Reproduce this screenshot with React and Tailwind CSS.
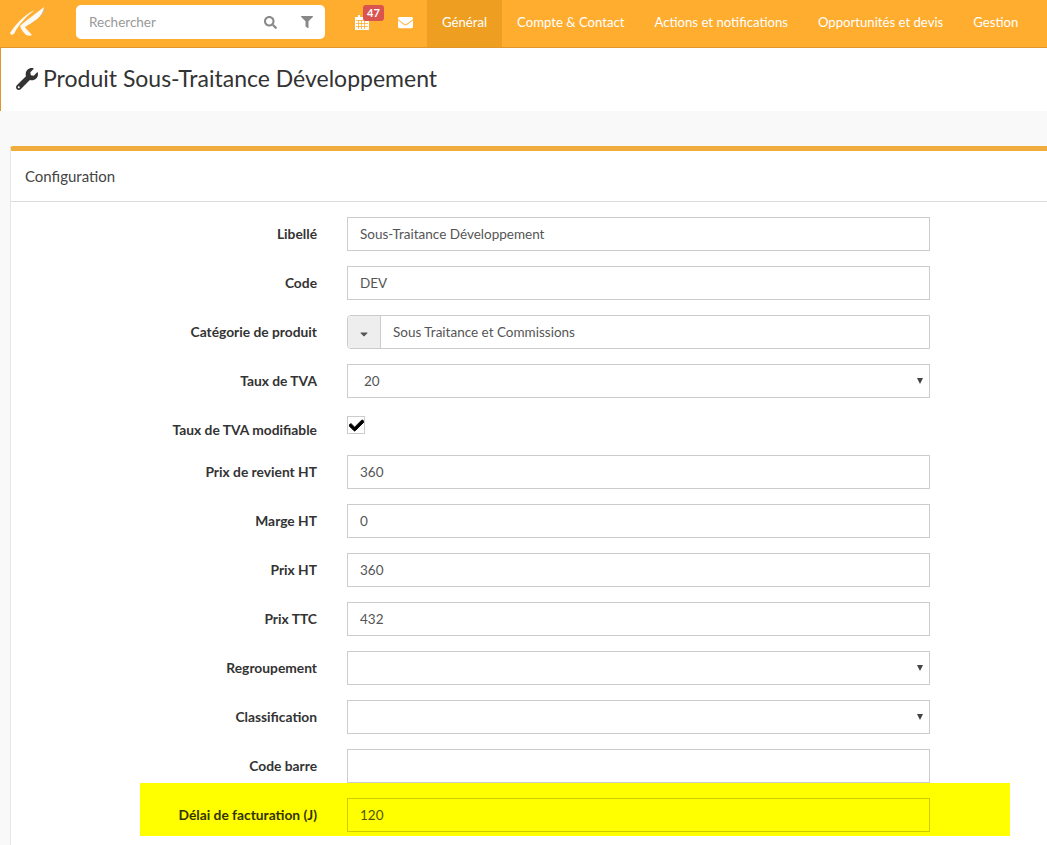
import React from "react";
import { FaCaretDown, FaCheck, FaEnvelope, FaFilter, FaSearch, FaWrench } from "react-icons/fa";

const font = { fontFamily: '"Lato", "Noto Sans", sans-serif' };

const navItems = ["Général", "Compte & Contact", "Actions et notifications", "Opportunités et devis", "Gestion"];

const Logo = () => (
  <svg width="38" height="32" viewBox="0 0 38 32">
    <path fill="#b9b5a8" d="M36 2 C35 9 27 14 18 20 L16 19 C24 14 31 9 36 2 Z" />
    <path fill="#fbf9f2" d="M26 4 C18 7 8 16 1 27 C2 30 5 29 6 26 C10 19 15 12 26 4 Z" />
    <path fill="#fbf9f2" d="M35 1 C28 7 20 12 13 18 L13 20 L16 21 C24 16 34 11 35 1 Z" />
    <path fill="#fbf9f2" d="M13 18 C17 22 20 26 23 29 C21 30 18 30 16 28 C14 26 12 23 11 20 Z" />
  </svg>
);

// same look as the grid calendar glyph in the top bar
const CalendarGrid = () => (
  <svg width="14" height="15" viewBox="0 0 14 15" fill="none">
    <rect x="0" y="2" width="14" height="13" fill="#fff" />
    <rect x="3" y="0" width="2" height="3" fill="#fff" />
    <rect x="9" y="0" width="2" height="3" fill="#fff" />
    <path d="M1 5.5H13M1 8.5H13M1 11.5H13M3.5 5V14M6.5 5V14M9.5 5V14" stroke="#ffad2f" strokeWidth="0.8" />
  </svg>
);

const Row = ({ label, children }) => (
  <div className="flex mb-[15px]">
    <label className="w-[336px] shrink-0 pr-[30px] text-right text-[13.8px] font-bold text-[#333] leading-[34px]">{label}</label>
    {children}
  </div>
);

const TextInput = ({ value }) => (
  <input
    readOnly
    value={value}
    className="w-[583px] h-[34px] border border-[#ccc] bg-white px-3 text-[13.5px] text-[#555] outline-none"
  />
);

const SelectInput = ({ value, options = [] }) => (
  <div className="relative h-[34px] w-[583px]">
    <select
      value={value}
      onChange={() => {}}
      className="h-[34px] w-full appearance-none border border-[#ccc] bg-white pl-4 pr-3 text-[13.5px] text-[#555] outline-none"
    >
      <option value=""></option>
      {options.map((o) => (
        <option key={o} value={o}>{o}</option>
      ))}
    </select>
    <span className="absolute right-[7px] top-[14px] h-0 w-0 border-x-[3px] border-t-[6px] border-x-transparent border-t-[#444]" />
  </div>
);

export default function App() {
  return (
    <div style={font} className="h-[845px] w-[1047px] overflow-hidden bg-[#f9f9f9]">
      {/* top bar */}
      <div className="flex h-[48px] items-stretch border-b border-[#e2952a] bg-[#ffad2f]">
        <div className="flex w-[76px] shrink-0 items-center pb-[3px] pl-[9px]">
          <Logo />
        </div>
        <div className="mt-[5px] flex h-[34px] w-[249px] shrink-0 items-center rounded-[5px] bg-white pl-[13px] pr-[12px]">
          <span className="flex-1 text-[13.5px] text-[#999]">Rechercher</span>
          <FaSearch className="mr-[24px] text-[13px] text-[#888]" />
          <FaFilter className="text-[12px] text-[#888]" />
        </div>
        <div className="relative ml-[30px] flex w-[43px] shrink-0 items-start pt-[15px]">
          <CalendarGrid />
          <span className="absolute left-[8px] top-[5px] w-[21px] rounded-[3px] bg-[#d9534f] text-center text-[11px] font-bold leading-[16px] text-white">47</span>
        </div>
        <div className="flex w-[29px] shrink-0 items-center pb-[3px]">
          <FaEnvelope className="text-[15px] text-white" />
        </div>
        {navItems.map((item, i) => (
          <div
            key={item}
            className={`flex shrink-0 items-center whitespace-nowrap px-[15px] pb-[1px] text-[13.15px] text-white ${i === 0 ? "bg-[#ee9f22]" : ""}`}
          >
            {item}
          </div>
        ))}
      </div>

      {/* title */}
      <div className="flex h-[63px] items-center gap-[5px] border-l border-[#e2952a] bg-white pb-[2px] pl-[15px]">
        <FaWrench className="text-[22px] text-[#333]" />
        <h1 className="whitespace-nowrap text-[23px] font-normal text-[#333]">Produit Sous-Traitance Développement</h1>
      </div>

      {/* card */}
      <div className="ml-[10px] mt-[35px] w-[1100px] rounded-t-[3px] border-l border-t-[5px] border-l-[#e5e5e5] border-t-[#f0ad3e] bg-white pb-[30px]">
        <div className="flex h-[51px] items-center border-b border-[#ddd] pl-[14px] text-[15px] text-[#444]">Configuration</div>
        <div className="pt-[15px]">
          <Row label="Libellé"><TextInput value="Sous-Traitance Développement" /></Row>
          <Row label="Code"><TextInput value="DEV" /></Row>
          <Row label="Catégorie de produit">
            <div className="flex h-[34px] w-[583px] rounded-l-[4px] border border-[#ccc]">
              <div className="flex w-[33px] items-center justify-center rounded-l-[4px] border-r border-[#ccc] bg-[#eee]">
                <FaCaretDown className="mt-[3px] text-[12px] text-[#555]" />
              </div>
              <div className="pl-3 text-[13.5px] leading-[32px] text-[#555]">Sous Traitance et Commissions</div>
            </div>
          </Row>
          <Row label="Taux de TVA"><SelectInput value="20" options={["20"]} /></Row>
          <div className="mb-[15px] flex h-[27px]">
            <label className="w-[336px] shrink-0 self-end pr-[30px] text-right text-[13.8px] font-bold leading-[20px] text-[#333]">Taux de TVA modifiable</label>
            <div className="mt-[3px] flex h-[18px] w-[18px] items-center justify-center border border-[#ccc] bg-white">
              <FaCheck className="text-[15px] text-black" stroke="black" strokeWidth="30" />
            </div>
          </div>
          <Row label="Prix de revient HT"><TextInput value="360" /></Row>
          <Row label="Marge HT"><TextInput value="0" /></Row>
          <Row label="Prix HT"><TextInput value="360" /></Row>
          <Row label="Prix TTC"><TextInput value="432" /></Row>
          <Row label="Regroupement"><SelectInput value="" /></Row>
          <Row label="Classification"><SelectInput value="" /></Row>
          <div className="flex">
            <label className="w-[336px] shrink-0 pr-[30px] text-right text-[13.8px] font-bold leading-[34px] text-[#333]">Code barre</label>
            <TextInput value="" />
          </div>
          {/* highlighted row */}
          <div className="ml-[129px] flex h-[53px] w-[870px] bg-[#ffff00] pt-[15px]">
            <label className="w-[207px] shrink-0 whitespace-nowrap pr-[30px] text-right text-[13.8px] font-bold leading-[34px] text-[#333300]">Délai de facturation (J)</label>
            <input
              readOnly
              value="120"
              className="h-[34px] w-[583px] border border-[#cccc00] bg-transparent px-3 text-[13.5px] text-[#555500] outline-none"
            />
          </div>
        </div>
      </div>
    </div>
  );
}
